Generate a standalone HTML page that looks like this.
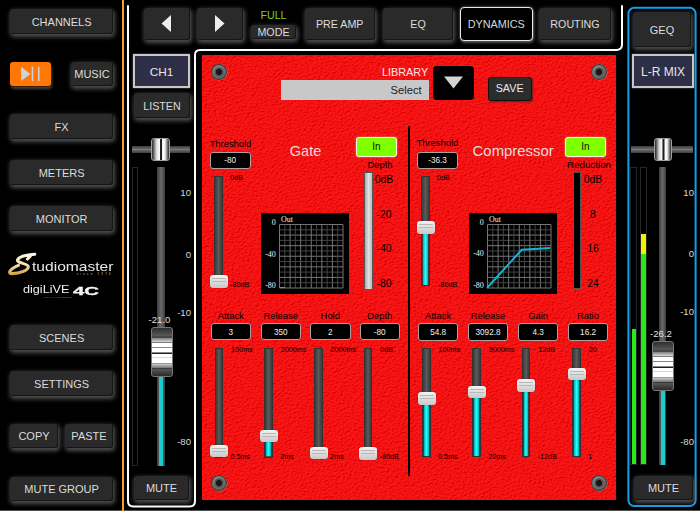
<!DOCTYPE html>
<html><head><meta charset="utf-8"><style>
html,body{margin:0;padding:0;}
body{width:700px;height:511px;overflow:hidden;background:#000;position:relative;font-family:'Liberation Sans', sans-serif;}
</style></head><body>
<div style="position:absolute;left:0;top:510px;width:700px;height:1px;background:#505050"></div>
<div style="position:absolute;left:122px;top:0px;width:2px;height:511px;background:#f4a12a;"></div>
<div style="position:absolute;left:9.8px;top:9px;width:103.6px;height:25px;background:#2a2a2a;border-radius:3px;box-shadow:inset -1px -1px 0 #151515, 1px 2px 4px 1px rgba(105,105,105,0.75);"></div>
<div style="position:absolute;left:-38.400000000000006px;width:200px;text-align:center;top:16.54px;font:11px/1 'Liberation Sans', sans-serif;color:#dcdcdc;white-space:nowrap;">CHANNELS</div>
<div style="position:absolute;left:9.7px;top:61.8px;width:41.6px;height:24.6px;background:#ff7806;border-radius:3px;box-shadow:0 1px 0 #3a1a00, 1px 3px 3px rgba(150,150,150,0.45);"></div>
<svg style="position:absolute;left:10px;top:62px" width="41" height="24"><path d="M11.1 4.8 L20.3 11.9 L11.1 19 Z" fill="#cfd2d6"/><rect x="21.7" y="4.8" width="1.5" height="14.2" fill="#cfd2d6"/><rect x="28" y="4.8" width="1.5" height="14.2" fill="#cfd2d6"/></svg>
<div style="position:absolute;left:71px;top:62px;width:42px;height:24px;background:#2a2a2a;border-radius:3px;box-shadow:inset -1px -1px 0 #151515, 1px 2px 4px 1px rgba(105,105,105,0.75);"></div>
<div style="position:absolute;left:-8.0px;width:200px;text-align:center;top:69.04px;font:11px/1 'Liberation Sans', sans-serif;color:#dcdcdc;white-space:nowrap;">MUSIC</div>
<div style="position:absolute;left:9.8px;top:114px;width:103.6px;height:25.2px;background:#2a2a2a;border-radius:3px;box-shadow:inset -1px -1px 0 #151515, 1px 2px 4px 1px rgba(105,105,105,0.75);"></div>
<div style="position:absolute;left:-38.400000000000006px;width:200px;text-align:center;top:121.64px;font:11px/1 'Liberation Sans', sans-serif;color:#dcdcdc;white-space:nowrap;">FX</div>
<div style="position:absolute;left:9.8px;top:160.4px;width:103.6px;height:25px;background:#2a2a2a;border-radius:3px;box-shadow:inset -1px -1px 0 #151515, 1px 2px 4px 1px rgba(105,105,105,0.75);"></div>
<div style="position:absolute;left:-38.400000000000006px;width:200px;text-align:center;top:167.95px;font:11px/1 'Liberation Sans', sans-serif;color:#dcdcdc;white-space:nowrap;">METERS</div>
<div style="position:absolute;left:9.8px;top:206px;width:103.6px;height:25.2px;background:#2a2a2a;border-radius:3px;box-shadow:inset -1px -1px 0 #151515, 1px 2px 4px 1px rgba(105,105,105,0.75);"></div>
<div style="position:absolute;left:-38.400000000000006px;width:200px;text-align:center;top:213.65px;font:11px/1 'Liberation Sans', sans-serif;color:#dcdcdc;white-space:nowrap;">MONITOR</div>
<div style="position:absolute;left:9.8px;top:325.2px;width:103.6px;height:25px;background:#2a2a2a;border-radius:3px;box-shadow:inset -1px -1px 0 #151515, 1px 2px 4px 1px rgba(105,105,105,0.75);"></div>
<div style="position:absolute;left:-38.400000000000006px;width:200px;text-align:center;top:332.75px;font:11px/1 'Liberation Sans', sans-serif;color:#dcdcdc;white-space:nowrap;">SCENES</div>
<div style="position:absolute;left:9.8px;top:371.3px;width:103.6px;height:24.6px;background:#2a2a2a;border-radius:3px;box-shadow:inset -1px -1px 0 #151515, 1px 2px 4px 1px rgba(105,105,105,0.75);"></div>
<div style="position:absolute;left:-38.400000000000006px;width:200px;text-align:center;top:378.65px;font:11px/1 'Liberation Sans', sans-serif;color:#dcdcdc;white-space:nowrap;">SETTINGS</div>
<div style="position:absolute;left:10px;top:424px;width:48px;height:24px;background:#2a2a2a;border-radius:3px;box-shadow:inset -1px -1px 0 #151515, 1px 2px 4px 1px rgba(105,105,105,0.75);"></div>
<div style="position:absolute;left:-66.0px;width:200px;text-align:center;top:431.05px;font:11px/1 'Liberation Sans', sans-serif;color:#dcdcdc;white-space:nowrap;">COPY</div>
<div style="position:absolute;left:65px;top:424px;width:48px;height:24px;background:#2a2a2a;border-radius:3px;box-shadow:inset -1px -1px 0 #151515, 1px 2px 4px 1px rgba(105,105,105,0.75);"></div>
<div style="position:absolute;left:-11.0px;width:200px;text-align:center;top:431.05px;font:11px/1 'Liberation Sans', sans-serif;color:#dcdcdc;white-space:nowrap;">PASTE</div>
<div style="position:absolute;left:9.8px;top:476.5px;width:103.6px;height:24.5px;background:#2a2a2a;border-radius:3px;box-shadow:inset -1px -1px 0 #151515, 1px 2px 4px 1px rgba(105,105,105,0.75);"></div>
<div style="position:absolute;left:-38.400000000000006px;width:200px;text-align:center;top:483.80px;font:11px/1 'Liberation Sans', sans-serif;color:#dcdcdc;white-space:nowrap;">MUTE GROUP</div>
<svg style="position:absolute;left:4px;top:248px" width="40" height="32"><defs><linearGradient id="sg" x1="0" y1="0" x2="0" y2="1"><stop offset="0" stop-color="#fff8e0"/><stop offset="0.55" stop-color="#f0e0b0"/><stop offset="1" stop-color="#d8a848"/></linearGradient></defs><path d="M30.7 6.3 C24 6.8 15 8.5 13.6 11.8 C12.4 15.2 23.5 15.3 24.2 18.4 C25 22 16 25.6 8 25.6 C3.5 25.6 5.5 21 14.4 17.4 M26.5 8 L23.5 11" fill="none" stroke="url(#sg)" stroke-width="3.1" stroke-linecap="round"/></svg>
<div style="position:absolute;left:31.9px;top:260.57px;font:12.7px/1 'Liberation Sans', sans-serif;color:#e8e8e8;white-space:nowrap;transform:scaleX(1.229);transform-origin:0 0;">tudiomaster</div>
<div style="position:absolute;left:76.8px;top:273.34px;font:2.9px/1 'Liberation Sans', sans-serif;color:#c0c0c0;white-space:nowrap;letter-spacing:2.2px;">since 1976</div>
<div style="position:absolute;left:23px;top:284.84px;font:10.4px/1 'Liberation Sans', sans-serif;color:#f0f0f0;white-space:nowrap;transform:scaleX(1.216);transform-origin:0 0;">digiLiVE</div>
<div style="position:absolute;left:72.8px;top:286.97px;font:10.2px/1 'Liberation Sans', sans-serif;color:#f4f4f4;white-space:nowrap;font-weight:bold;-webkit-text-stroke:0.3px #f4f4f4;transform:scaleX(2.0);transform-origin:0 0;">4C</div>
<div style="position:absolute;left:44px;top:296.51px;font:1.8px/1 'Liberation Sans', sans-serif;color:#999;white-space:nowrap;letter-spacing:0.2px;">DIGITAL MIXING CONSOLE</div>
<svg style="position:absolute;left:0;top:0" width="700" height="511"><path d="M128 6 V501 Q128 506.5 133.5 506.5 H189.5 Q195 506.5 195 501 V55 Q195 50 200 50 H617 Q622 49.5 622 44.5 V6" fill="none" stroke="#fff" stroke-width="2" stroke-linecap="round"/><rect x="628.4" y="7.8" width="67.2" height="498.3" rx="6" fill="none" stroke="#12a0ec" stroke-width="2"/></svg>
<div style="position:absolute;left:144px;top:8px;width:46px;height:31.5px;background:#2a2a2a;border-radius:3px;box-shadow:inset -1px -1px 0 #151515, 1px 2px 4px 1px rgba(105,105,105,0.75);"></div>
<div style="position:absolute;left:67.0px;width:200px;text-align:center;top:18.79px;font:11px/1 'Liberation Sans', sans-serif;color:#dcdcdc;white-space:nowrap;"></div>
<svg style="position:absolute;left:144px;top:8px" width="46" height="31"><path d="M17.5 15.5 L27 7 L27 24 Z" fill="#eee"/></svg>
<div style="position:absolute;left:197px;top:8px;width:46px;height:31.5px;background:#2a2a2a;border-radius:3px;box-shadow:inset -1px -1px 0 #151515, 1px 2px 4px 1px rgba(105,105,105,0.75);"></div>
<div style="position:absolute;left:120.0px;width:200px;text-align:center;top:18.79px;font:11px/1 'Liberation Sans', sans-serif;color:#dcdcdc;white-space:nowrap;"></div>
<svg style="position:absolute;left:197px;top:8px" width="46" height="31"><path d="M27.5 15.5 L18 7 L18 24 Z" fill="#eee"/></svg>
<div style="position:absolute;left:173.5px;width:200px;text-align:center;top:10.30px;font:10.6px/1 'Liberation Sans', sans-serif;color:#7fd41c;white-space:nowrap;">FULL</div>
<div style="position:absolute;left:251px;top:25px;width:45px;height:14px;background:#2a2a2a;border-radius:3px;box-shadow:inset -1px -1px 0 #151515, 1px 2px 4px 1px rgba(105,105,105,0.75);"></div>
<div style="position:absolute;left:173.5px;width:200px;text-align:center;top:27.20px;font:10.7px/1 'Liberation Sans', sans-serif;color:#dcdcdc;white-space:nowrap;">MODE</div>
<div style="position:absolute;left:305px;top:8px;width:69.5px;height:31.5px;background:#2a2a2a;border-radius:3px;box-shadow:inset -1px -1px 0 #151515, 1px 2px 4px 1px rgba(105,105,105,0.75);"></div>
<div style="position:absolute;left:239.75px;width:200px;text-align:center;top:18.95px;font:10.7px/1 'Liberation Sans', sans-serif;color:#dcdcdc;white-space:nowrap;">PRE AMP</div>
<div style="position:absolute;left:383px;top:8px;width:70px;height:31.5px;background:#2a2a2a;border-radius:3px;box-shadow:inset -1px -1px 0 #151515, 1px 2px 4px 1px rgba(105,105,105,0.75);"></div>
<div style="position:absolute;left:318.0px;width:200px;text-align:center;top:18.95px;font:10.7px/1 'Liberation Sans', sans-serif;color:#dcdcdc;white-space:nowrap;">EQ</div>
<div style="position:absolute;left:460px;top:6.8px;width:72.5px;height:33.8px;box-sizing:border-box;background:#000;border:1.6px solid #e8e8e8;border-radius:4px;box-shadow:0 0 3px rgba(255,255,255,0.45), 1px 2px 3px rgba(150,150,150,0.4);"></div>
<div style="position:absolute;left:396.2px;width:200px;text-align:center;top:19.07px;font:10.8px/1 'Liberation Sans', sans-serif;color:#d8d8d8;white-space:nowrap;">DYNAMICS</div>
<div style="position:absolute;left:539px;top:8px;width:72px;height:31.5px;background:#2a2a2a;border-radius:3px;box-shadow:inset -1px -1px 0 #151515, 1px 2px 4px 1px rgba(105,105,105,0.75);"></div>
<div style="position:absolute;left:475.0px;width:200px;text-align:center;top:18.95px;font:10.7px/1 'Liberation Sans', sans-serif;color:#dcdcdc;white-space:nowrap;">ROUTING</div>
<div style="position:absolute;left:133px;top:54px;width:57px;height:34px;box-sizing:border-box;background:#2e2e47;border:2px solid #c8c8c8;box-shadow:0 0 2px rgba(200,200,200,0.5);"></div>
<div style="position:absolute;left:61.5px;width:200px;text-align:center;top:67.01px;font:11.8px/1 'Liberation Sans', sans-serif;color:#e8e8e8;white-space:nowrap;">CH1</div>
<div style="position:absolute;left:134px;top:93px;width:56px;height:25px;background:#2a2a2a;border-radius:3px;box-shadow:inset -1px -1px 0 #151515, 1px 2px 4px 1px rgba(105,105,105,0.75);"></div>
<div style="position:absolute;left:62.0px;width:200px;text-align:center;top:100.70px;font:10.7px/1 'Liberation Sans', sans-serif;color:#dcdcdc;white-space:nowrap;">LISTEN</div>
<div style="position:absolute;left:132px;top:146px;width:58px;height:7.3px;background:linear-gradient(#3e3e3e 0%,#5a5a5a 30%,#787878 50%,#5a5a5a 70%,#3e3e3e 100%);"></div>
<div style="position:absolute;left:151px;top:138px;width:18.7px;height:23px;box-sizing:border-box;border:1px solid #a0a0a0;border-radius:3px;background:linear-gradient(90deg,#2a2a2a 0%,#5a5a5a 8%,#d8d8d8 26%,#fff 44%,#222 49%,#1a1a1a 57%,#fff 62%,#f0f0f0 76%,#777 90%,#2a2a2a 100%);"></div>
<div style="position:absolute;left:131.5px;top:166.5px;width:6.5px;height:299px;box-sizing:border-box;border:1px solid #262626;"></div>
<div style="position:absolute;left:157px;top:167px;width:8px;height:299px;background:linear-gradient(90deg,#3c3c3c,#6a6a6a 50%,#3c3c3c);"></div>
<div style="position:absolute;left:159px;top:377px;width:4px;height:88.5px;background:#1ccccc;"></div>
<div style="position:absolute;left:151px;top:327px;width:22.3px;height:50.3px;box-sizing:border-box;border:1px solid #777;border-radius:3px;background:linear-gradient(#2e2e2e 0%,#5a5a5a 17%,#333 18.5%,#333 19.5%,#7a7a7a 20.5%,#dcdcdc 29.5%,#555 30.5%,#fff 32%,#fff 39%,#444 40.2%,#fff 41.4%,#fff 50.5%,#222 51.5%,#222 53.5%,#fff 54.5%,#fff 61%,#999 62.2%,#fff 63.5%,#fff 72%,#555 73.2%,#cfcfcf 74.5%,#777 83%,#333 84.5%,#555 86%,#2a2a2a 100%);"></div>
<div style="position:absolute;left:59.5px;width:200px;text-align:center;top:315.46px;font:9.6px/1 'Liberation Sans', sans-serif;color:#e0e0e0;white-space:nowrap;">-21.0</div>
<div style="position:absolute;left:-9px;width:200px;text-align:right;top:188.46px;font:9.6px/1 'Liberation Sans', sans-serif;color:#d8d8d8;white-space:nowrap;">10</div>
<div style="position:absolute;left:-9px;width:200px;text-align:right;top:250.06px;font:9.6px/1 'Liberation Sans', sans-serif;color:#d8d8d8;white-space:nowrap;">0</div>
<div style="position:absolute;left:-9px;width:200px;text-align:right;top:308.46px;font:9.6px/1 'Liberation Sans', sans-serif;color:#d8d8d8;white-space:nowrap;">-10</div>
<div style="position:absolute;left:-9px;width:200px;text-align:right;top:437.26px;font:9.6px/1 'Liberation Sans', sans-serif;color:#d8d8d8;white-space:nowrap;">-80</div>
<div style="position:absolute;left:134px;top:476px;width:55px;height:24px;background:#2a2a2a;border-radius:3px;box-shadow:inset -1px -1px 0 #151515, 1px 2px 4px 1px rgba(105,105,105,0.75);"></div>
<div style="position:absolute;left:61.5px;width:200px;text-align:center;top:483.05px;font:11px/1 'Liberation Sans', sans-serif;color:#dcdcdc;white-space:nowrap;">MUTE</div>
<div style="position:absolute;left:633px;top:12px;width:58px;height:35px;background:#2a2a2a;border-radius:3px;box-shadow:inset -1px -1px 0 #151515, 1px 2px 4px 1px rgba(105,105,105,0.75);"></div>
<div style="position:absolute;left:562.0px;width:200px;text-align:center;top:24.54px;font:11px/1 'Liberation Sans', sans-serif;color:#dcdcdc;white-space:nowrap;">GEQ</div>
<div style="position:absolute;left:632px;top:54px;width:62px;height:34px;box-sizing:border-box;background:#2e2e47;border:2px solid #c8c8c8;box-shadow:0 0 2px rgba(200,200,200,0.5);"></div>
<div style="position:absolute;left:563px;width:200px;text-align:center;top:66.48px;font:12px/1 'Liberation Sans', sans-serif;color:#e8e8e8;white-space:nowrap;">L-R MIX</div>
<div style="position:absolute;left:631px;top:146px;width:62px;height:7.3px;background:linear-gradient(#3e3e3e 0%,#5a5a5a 30%,#787878 50%,#5a5a5a 70%,#3e3e3e 100%);"></div>
<div style="position:absolute;left:653.5px;top:138px;width:18.7px;height:23px;box-sizing:border-box;border:1px solid #a0a0a0;border-radius:3px;background:linear-gradient(90deg,#2a2a2a 0%,#5a5a5a 8%,#d8d8d8 26%,#fff 44%,#222 49%,#1a1a1a 57%,#fff 62%,#f0f0f0 76%,#777 90%,#2a2a2a 100%);"></div>
<div style="position:absolute;left:630px;top:166.5px;width:6.5px;height:298px;box-sizing:border-box;border:1px solid #262626;"></div>
<div style="position:absolute;left:639.7px;top:166.5px;width:7px;height:298px;box-sizing:border-box;border:1px solid #262626;"></div>
<div style="position:absolute;left:631.5px;top:328.7px;width:4.5px;height:135.5px;background:#26ea1c;"></div>
<div style="position:absolute;left:641px;top:233.5px;width:4.6px;height:20.1px;background:#f4f000;"></div>
<div style="position:absolute;left:641px;top:253.6px;width:4.6px;height:210.6px;background:#26ea1c;"></div>
<div style="position:absolute;left:659px;top:167px;width:7px;height:298px;background:linear-gradient(90deg,#3c3c3c,#6a6a6a 50%,#3c3c3c);"></div>
<div style="position:absolute;left:661px;top:391px;width:3.5px;height:74px;background:#1ccccc;"></div>
<div style="position:absolute;left:652px;top:341px;width:22.3px;height:50.3px;box-sizing:border-box;border:1px solid #777;border-radius:3px;background:linear-gradient(#2e2e2e 0%,#5a5a5a 17%,#333 18.5%,#333 19.5%,#7a7a7a 20.5%,#dcdcdc 29.5%,#555 30.5%,#fff 32%,#fff 39%,#444 40.2%,#fff 41.4%,#fff 50.5%,#222 51.5%,#222 53.5%,#fff 54.5%,#fff 61%,#999 62.2%,#fff 63.5%,#fff 72%,#555 73.2%,#cfcfcf 74.5%,#777 83%,#333 84.5%,#555 86%,#2a2a2a 100%);"></div>
<div style="position:absolute;left:561px;width:200px;text-align:center;top:328.66px;font:9.6px/1 'Liberation Sans', sans-serif;color:#e0e0e0;white-space:nowrap;">-26.2</div>
<div style="position:absolute;left:494px;width:200px;text-align:right;top:187.56px;font:9.6px/1 'Liberation Sans', sans-serif;color:#d8d8d8;white-space:nowrap;">10</div>
<div style="position:absolute;left:494px;width:200px;text-align:right;top:248.66px;font:9.6px/1 'Liberation Sans', sans-serif;color:#d8d8d8;white-space:nowrap;">0</div>
<div style="position:absolute;left:494px;width:200px;text-align:right;top:307.06px;font:9.6px/1 'Liberation Sans', sans-serif;color:#d8d8d8;white-space:nowrap;">-10</div>
<div style="position:absolute;left:494px;width:200px;text-align:right;top:436.66px;font:9.6px/1 'Liberation Sans', sans-serif;color:#d8d8d8;white-space:nowrap;">-80</div>
<div style="position:absolute;left:634px;top:476px;width:59px;height:24px;background:#2a2a2a;border-radius:3px;box-shadow:inset -1px -1px 0 #151515, 1px 2px 4px 1px rgba(105,105,105,0.75);"></div>
<div style="position:absolute;left:563.5px;width:200px;text-align:center;top:483.05px;font:11px/1 'Liberation Sans', sans-serif;color:#dcdcdc;white-space:nowrap;">MUTE</div>
<svg style="position:absolute;left:202px;top:55px" width="414" height="445"><defs><filter id="leather" x="0" y="0" width="100%" height="100%"><feTurbulence type="fractalNoise" baseFrequency="0.45 0.8" numOctaves="2" seed="3" result="noise"/><feDiffuseLighting in="noise" lighting-color="#fff" surfaceScale="0.9" result="light"><feDistantLight azimuth="235" elevation="60"/></feDiffuseLighting><feComposite in="light" in2="SourceGraphic" operator="arithmetic" k1="1.04" k2="0.03" k3="0" k4="-0.03"/></filter></defs><rect x="0" y="0" width="414" height="445" fill="#ff1c1c" filter="url(#leather)"/></svg>
<svg style="position:absolute;left:209.4px;top:62.3px" width="20" height="20"><defs><radialGradient id="scr21972" cx="0.4" cy="0.35" r="0.7"><stop offset="0" stop-color="#9a9a9a"/><stop offset="1" stop-color="#5a5a5a"/></radialGradient></defs><circle cx="10.3" cy="10.3" r="8.2" fill="#f0c8c8" opacity="0.55"/><circle cx="10" cy="10" r="8" fill="#333"/><circle cx="10" cy="10" r="7" fill="url(#scr21972)"/><circle cx="10" cy="10" r="4.8" fill="#555"/><path d="M10 6.6 L12.9 8.3 L12.9 11.7 L10 13.4 L7.1 11.7 L7.1 8.3 Z" fill="#161616"/></svg>
<svg style="position:absolute;left:588.8px;top:62.3px" width="20" height="20"><defs><radialGradient id="scr59872" cx="0.4" cy="0.35" r="0.7"><stop offset="0" stop-color="#9a9a9a"/><stop offset="1" stop-color="#5a5a5a"/></radialGradient></defs><circle cx="10.3" cy="10.3" r="8.2" fill="#f0c8c8" opacity="0.55"/><circle cx="10" cy="10" r="8" fill="#333"/><circle cx="10" cy="10" r="7" fill="url(#scr59872)"/><circle cx="10" cy="10" r="4.8" fill="#555"/><path d="M10 6.6 L12.9 8.3 L12.9 11.7 L10 13.4 L7.1 11.7 L7.1 8.3 Z" fill="#161616"/></svg>
<svg style="position:absolute;left:209.4px;top:472.7px" width="20" height="20"><defs><radialGradient id="scr219482" cx="0.4" cy="0.35" r="0.7"><stop offset="0" stop-color="#9a9a9a"/><stop offset="1" stop-color="#5a5a5a"/></radialGradient></defs><circle cx="10.3" cy="10.3" r="8.2" fill="#f0c8c8" opacity="0.55"/><circle cx="10" cy="10" r="8" fill="#333"/><circle cx="10" cy="10" r="7" fill="url(#scr219482)"/><circle cx="10" cy="10" r="4.8" fill="#555"/><path d="M10 6.6 L12.9 8.3 L12.9 11.7 L10 13.4 L7.1 11.7 L7.1 8.3 Z" fill="#161616"/></svg>
<svg style="position:absolute;left:588.9px;top:472.8px" width="20" height="20"><defs><radialGradient id="scr598482" cx="0.4" cy="0.35" r="0.7"><stop offset="0" stop-color="#9a9a9a"/><stop offset="1" stop-color="#5a5a5a"/></radialGradient></defs><circle cx="10.3" cy="10.3" r="8.2" fill="#f0c8c8" opacity="0.55"/><circle cx="10" cy="10" r="8" fill="#333"/><circle cx="10" cy="10" r="7" fill="url(#scr598482)"/><circle cx="10" cy="10" r="4.8" fill="#555"/><path d="M10 6.6 L12.9 8.3 L12.9 11.7 L10 13.4 L7.1 11.7 L7.1 8.3 Z" fill="#161616"/></svg>
<div style="position:absolute;left:228.3px;width:200px;text-align:right;top:67.26px;font:10.9px/1 'Liberation Sans', sans-serif;color:#ffe4e4;white-space:nowrap;">LIBRARY</div>
<div style="position:absolute;left:281px;top:80px;width:148px;height:20px;background:#c8c8c8;"></div>
<div style="position:absolute;left:221.7px;width:200px;text-align:right;top:84.81px;font:11.2px/1 'Liberation Sans', sans-serif;color:#222;white-space:nowrap;">Select</div>
<div style="position:absolute;left:433px;top:66px;width:41px;height:33.5px;background:#000;border-radius:4px;"></div>
<svg style="position:absolute;left:433px;top:66px" width="41" height="34"><path d="M11 10.5 L30 10.5 L20.5 22.5 Z" fill="#d4d4d4"/></svg>
<div style="position:absolute;left:488px;top:77px;width:43.5px;height:23.5px;box-sizing:border-box;background:#2c2c2c;border:1px solid #111;border-radius:3px;box-shadow:1px 1px 2px rgba(40,40,40,0.7);"></div>
<div style="position:absolute;left:409.7px;width:200px;text-align:center;top:83.47px;font:10.8px/1 'Liberation Sans', sans-serif;color:#e8e8e8;white-space:nowrap;">SAVE</div>
<div style="position:absolute;left:408px;top:126px;width:2px;height:350px;background:#000;"></div>
<div style="position:absolute;left:130.5px;width:200px;text-align:center;top:139.00px;font:9.4px/1 'Liberation Sans', sans-serif;color:#000;white-space:nowrap;">Threshold</div>
<div style="position:absolute;left:210px;top:152px;width:40.5px;height:16.5px;box-sizing:border-box;background:#000;border:1px solid #b0a0a0;border-radius:3px;"></div>
<div style="position:absolute;left:130.25px;width:200px;text-align:center;top:156.64px;font:8.2px/1 'Liberation Sans', sans-serif;color:#f0f0f0;white-space:nowrap;">-80</div>
<div style="position:absolute;left:230.1px;top:173.85px;font:7.2px/1 'Liberation Sans', sans-serif;color:#000;white-space:nowrap;">0dB</div>
<div style="position:absolute;left:214px;top:176.3px;width:8.5px;height:109.69999999999999px;box-sizing:border-box;background:linear-gradient(90deg,#3a3a3a,#5a5a5a 50%,#3a3a3a);border:1px solid #333;"></div>
<div style="position:absolute;left:209.5px;top:275px;width:18px;height:12.5px;box-sizing:border-box;border-radius:3px;background:linear-gradient(#f4f4f4,#e6e6e6 30%,#c8c8c8 100%);box-shadow:0 0 1px rgba(0,0,0,0.5);"></div>
<div style="position:absolute;left:211.5px;top:278px;width:14px;height:1px;background:#b8b8b8;"></div>
<div style="position:absolute;left:211.5px;top:281px;width:14px;height:1px;background:#b8b8b8;"></div>
<div style="position:absolute;left:230px;top:280.65px;font:7.2px/1 'Liberation Sans', sans-serif;color:#000;white-space:nowrap;">-80dB</div>
<div style="position:absolute;left:289.7px;top:143.76px;font:14.6px/1 'Liberation Sans', sans-serif;color:#e2dcdc;white-space:nowrap;">Gate</div>
<div style="position:absolute;left:356px;top:137px;width:41px;height:19.5px;box-sizing:border-box;background:#80ff00;border:1.5px solid #f4f4e0;border-radius:3px;box-shadow:0 0 2px rgba(255,255,255,0.6);"></div>
<div style="position:absolute;left:276.5px;width:200px;text-align:center;top:142.40px;font:10px/1 'Liberation Sans', sans-serif;color:#111;white-space:nowrap;">In</div>
<div style="position:absolute;left:280px;width:200px;text-align:center;top:159.50px;font:9.4px/1 'Liberation Sans', sans-serif;color:#000;white-space:nowrap;">Depth</div>
<div style="position:absolute;left:364px;top:172px;width:8.5px;height:118px;box-sizing:border-box;background:linear-gradient(90deg,#aaa,#e0e0e0 50%,#bbb);border:1px solid #555;"></div>
<div style="position:absolute;left:284px;width:200px;text-align:center;top:175.44px;font:10.4px/1 'Liberation Sans', sans-serif;color:#000;white-space:nowrap;">0dB</div>
<div style="position:absolute;left:284px;width:200px;text-align:center;top:210.14px;font:10.4px/1 'Liberation Sans', sans-serif;color:#000;white-space:nowrap;">-20</div>
<div style="position:absolute;left:284px;width:200px;text-align:center;top:244.44px;font:10.4px/1 'Liberation Sans', sans-serif;color:#000;white-space:nowrap;">-40</div>
<div style="position:absolute;left:284px;width:200px;text-align:center;top:278.94px;font:10.4px/1 'Liberation Sans', sans-serif;color:#000;white-space:nowrap;">-80</div>
<div style="position:absolute;left:261px;top:213px;width:88px;height:81px;background:#000;"></div>
<svg style="position:absolute;left:278.5px;top:224.0px;overflow:visible" width="64" height="64"><g transform="translate(0.5,0.5)"><line x1="0.00" y1="0" x2="0.00" y2="63.5" stroke="#777" stroke-width="1"/><line x1="0" y1="0.00" x2="63.5" y2="0.00" stroke="#777" stroke-width="1"/><line x1="5.29" y1="0" x2="5.29" y2="63.5" stroke="#444" stroke-width="1"/><line x1="0" y1="5.29" x2="63.5" y2="5.29" stroke="#444" stroke-width="1"/><line x1="10.58" y1="0" x2="10.58" y2="63.5" stroke="#777" stroke-width="1"/><line x1="0" y1="10.58" x2="63.5" y2="10.58" stroke="#777" stroke-width="1"/><line x1="15.88" y1="0" x2="15.88" y2="63.5" stroke="#444" stroke-width="1"/><line x1="0" y1="15.88" x2="63.5" y2="15.88" stroke="#444" stroke-width="1"/><line x1="21.17" y1="0" x2="21.17" y2="63.5" stroke="#777" stroke-width="1"/><line x1="0" y1="21.17" x2="63.5" y2="21.17" stroke="#777" stroke-width="1"/><line x1="26.46" y1="0" x2="26.46" y2="63.5" stroke="#444" stroke-width="1"/><line x1="0" y1="26.46" x2="63.5" y2="26.46" stroke="#444" stroke-width="1"/><line x1="31.75" y1="0" x2="31.75" y2="63.5" stroke="#777" stroke-width="1"/><line x1="0" y1="31.75" x2="63.5" y2="31.75" stroke="#777" stroke-width="1"/><line x1="37.04" y1="0" x2="37.04" y2="63.5" stroke="#444" stroke-width="1"/><line x1="0" y1="37.04" x2="63.5" y2="37.04" stroke="#444" stroke-width="1"/><line x1="42.33" y1="0" x2="42.33" y2="63.5" stroke="#777" stroke-width="1"/><line x1="0" y1="42.33" x2="63.5" y2="42.33" stroke="#777" stroke-width="1"/><line x1="47.62" y1="0" x2="47.62" y2="63.5" stroke="#444" stroke-width="1"/><line x1="0" y1="47.62" x2="63.5" y2="47.62" stroke="#444" stroke-width="1"/><line x1="52.92" y1="0" x2="52.92" y2="63.5" stroke="#777" stroke-width="1"/><line x1="0" y1="52.92" x2="63.5" y2="52.92" stroke="#777" stroke-width="1"/><line x1="58.21" y1="0" x2="58.21" y2="63.5" stroke="#444" stroke-width="1"/><line x1="0" y1="58.21" x2="63.5" y2="58.21" stroke="#444" stroke-width="1"/><line x1="63.50" y1="0" x2="63.50" y2="63.5" stroke="#777" stroke-width="1"/><line x1="0" y1="63.50" x2="63.5" y2="63.50" stroke="#777" stroke-width="1"/></g></svg>
<div style="position:absolute;left:281px;top:215.76px;font:8px/1 'Liberation Serif', serif;color:#f0f0f0;white-space:nowrap;">Out</div>
<div style="position:absolute;left:75.80000000000001px;width:200px;text-align:right;top:219.06px;font:8px/1 'Liberation Serif', serif;color:#f0f0f0;white-space:nowrap;">0</div>
<div style="position:absolute;left:75.80000000000001px;width:200px;text-align:right;top:250.66px;font:8px/1 'Liberation Serif', serif;color:#f0f0f0;white-space:nowrap;">-40</div>
<div style="position:absolute;left:75.80000000000001px;width:200px;text-align:right;top:282.16px;font:8px/1 'Liberation Serif', serif;color:#f0f0f0;white-space:nowrap;">-80</div>
<div style="position:absolute;left:279.5px;top:286.8px;width:5px;height:1.6px;background:#1ab8d0;"></div>
<div style="position:absolute;left:130.75px;width:200px;text-align:center;top:310.90px;font:9.4px/1 'Liberation Sans', sans-serif;color:#000;white-space:nowrap;">Attack</div>
<div style="position:absolute;left:210.5px;top:323.3px;width:40.5px;height:17.2px;box-sizing:border-box;background:#000;border:1px solid #b0a0a0;border-radius:3px;"></div>
<div style="position:absolute;left:130.75px;width:200px;text-align:center;top:328.89px;font:8.2px/1 'Liberation Sans', sans-serif;color:#f0f0f0;white-space:nowrap;">3</div>
<div style="position:absolute;left:231.0px;top:345.75px;font:7.2px/1 'Liberation Sans', sans-serif;color:#000;white-space:nowrap;">100ms</div>
<div style="position:absolute;left:214.5px;top:348px;width:8.5px;height:109.5px;box-sizing:border-box;background:linear-gradient(90deg,#3a3a3a,#5a5a5a 50%,#3a3a3a);border:1px solid #333;"></div>
<div style="position:absolute;left:210.0px;top:444.6px;width:18px;height:12.5px;box-sizing:border-box;border-radius:3px;background:linear-gradient(#f4f4f4,#e6e6e6 30%,#c8c8c8 100%);box-shadow:0 0 1px rgba(0,0,0,0.5);"></div>
<div style="position:absolute;left:212.0px;top:447.6px;width:14px;height:1px;background:#b8b8b8;"></div>
<div style="position:absolute;left:212.0px;top:450.6px;width:14px;height:1px;background:#b8b8b8;"></div>
<div style="position:absolute;left:230.5px;top:453.25px;font:7.2px/1 'Liberation Sans', sans-serif;color:#000;white-space:nowrap;">0.5ms</div>
<div style="position:absolute;left:180.75px;width:200px;text-align:center;top:310.90px;font:9.4px/1 'Liberation Sans', sans-serif;color:#000;white-space:nowrap;">Release</div>
<div style="position:absolute;left:260.5px;top:323.3px;width:40.5px;height:17.2px;box-sizing:border-box;background:#000;border:1px solid #b0a0a0;border-radius:3px;"></div>
<div style="position:absolute;left:180.75px;width:200px;text-align:center;top:328.89px;font:8.2px/1 'Liberation Sans', sans-serif;color:#f0f0f0;white-space:nowrap;">350</div>
<div style="position:absolute;left:280.8px;top:345.75px;font:7.2px/1 'Liberation Sans', sans-serif;color:#000;white-space:nowrap;">2000ms</div>
<div style="position:absolute;left:264.3px;top:348px;width:8.5px;height:109.5px;box-sizing:border-box;background:linear-gradient(90deg,#3a3a3a,#5a5a5a 50%,#3a3a3a);border:1px solid #333;"></div>
<div style="position:absolute;left:266.3px;top:441.7px;width:4.5px;height:14.800000000000011px;background:linear-gradient(90deg,#08b0b0,#2ff 50%,#08b0b0);"></div>
<div style="position:absolute;left:259.8px;top:429.7px;width:18px;height:12.5px;box-sizing:border-box;border-radius:3px;background:linear-gradient(#f4f4f4,#e6e6e6 30%,#c8c8c8 100%);box-shadow:0 0 1px rgba(0,0,0,0.5);"></div>
<div style="position:absolute;left:261.8px;top:432.7px;width:14px;height:1px;background:#b8b8b8;"></div>
<div style="position:absolute;left:261.8px;top:435.7px;width:14px;height:1px;background:#b8b8b8;"></div>
<div style="position:absolute;left:280.3px;top:453.25px;font:7.2px/1 'Liberation Sans', sans-serif;color:#000;white-space:nowrap;">2ms</div>
<div style="position:absolute;left:230.25px;width:200px;text-align:center;top:310.90px;font:9.4px/1 'Liberation Sans', sans-serif;color:#000;white-space:nowrap;">Hold</div>
<div style="position:absolute;left:310px;top:323.3px;width:40.5px;height:17.2px;box-sizing:border-box;background:#000;border:1px solid #b0a0a0;border-radius:3px;"></div>
<div style="position:absolute;left:230.25px;width:200px;text-align:center;top:328.89px;font:8.2px/1 'Liberation Sans', sans-serif;color:#f0f0f0;white-space:nowrap;">2</div>
<div style="position:absolute;left:330.6px;top:345.75px;font:7.2px/1 'Liberation Sans', sans-serif;color:#000;white-space:nowrap;">2000ms</div>
<div style="position:absolute;left:314.1px;top:348px;width:8.5px;height:109.5px;box-sizing:border-box;background:linear-gradient(90deg,#3a3a3a,#5a5a5a 50%,#3a3a3a);border:1px solid #333;"></div>
<div style="position:absolute;left:309.6px;top:446.7px;width:18px;height:12.5px;box-sizing:border-box;border-radius:3px;background:linear-gradient(#f4f4f4,#e6e6e6 30%,#c8c8c8 100%);box-shadow:0 0 1px rgba(0,0,0,0.5);"></div>
<div style="position:absolute;left:311.6px;top:449.7px;width:14px;height:1px;background:#b8b8b8;"></div>
<div style="position:absolute;left:311.6px;top:452.7px;width:14px;height:1px;background:#b8b8b8;"></div>
<div style="position:absolute;left:330.1px;top:453.25px;font:7.2px/1 'Liberation Sans', sans-serif;color:#000;white-space:nowrap;">2ms</div>
<div style="position:absolute;left:279.75px;width:200px;text-align:center;top:310.90px;font:9.4px/1 'Liberation Sans', sans-serif;color:#000;white-space:nowrap;">Depth</div>
<div style="position:absolute;left:359.5px;top:323.3px;width:40.5px;height:17.2px;box-sizing:border-box;background:#000;border:1px solid #b0a0a0;border-radius:3px;"></div>
<div style="position:absolute;left:279.75px;width:200px;text-align:center;top:328.89px;font:8.2px/1 'Liberation Sans', sans-serif;color:#f0f0f0;white-space:nowrap;">-80</div>
<div style="position:absolute;left:380.1px;top:345.75px;font:7.2px/1 'Liberation Sans', sans-serif;color:#000;white-space:nowrap;">0dB</div>
<div style="position:absolute;left:363.6px;top:348px;width:8.5px;height:109.5px;box-sizing:border-box;background:linear-gradient(90deg,#3a3a3a,#5a5a5a 50%,#3a3a3a);border:1px solid #333;"></div>
<div style="position:absolute;left:359.1px;top:447px;width:18px;height:12.5px;box-sizing:border-box;border-radius:3px;background:linear-gradient(#f4f4f4,#e6e6e6 30%,#c8c8c8 100%);box-shadow:0 0 1px rgba(0,0,0,0.5);"></div>
<div style="position:absolute;left:361.1px;top:450px;width:14px;height:1px;background:#b8b8b8;"></div>
<div style="position:absolute;left:361.1px;top:453px;width:14px;height:1px;background:#b8b8b8;"></div>
<div style="position:absolute;left:379.6px;top:453.25px;font:7.2px/1 'Liberation Sans', sans-serif;color:#000;white-space:nowrap;">-80dB</div>
<div style="position:absolute;left:337.4px;width:200px;text-align:center;top:138.30px;font:9.4px/1 'Liberation Sans', sans-serif;color:#000;white-space:nowrap;">Threshold</div>
<div style="position:absolute;left:417px;top:152px;width:41px;height:16.5px;box-sizing:border-box;background:#000;border:1px solid #b0a0a0;border-radius:3px;"></div>
<div style="position:absolute;left:337.5px;width:200px;text-align:center;top:156.64px;font:8.2px/1 'Liberation Sans', sans-serif;color:#f0f0f0;white-space:nowrap;">-36.3</div>
<div style="position:absolute;left:437px;top:174.05px;font:7.2px/1 'Liberation Sans', sans-serif;color:#000;white-space:nowrap;">0dB</div>
<div style="position:absolute;left:421px;top:176px;width:8.5px;height:109.69999999999999px;box-sizing:border-box;background:linear-gradient(90deg,#3a3a3a,#5a5a5a 50%,#3a3a3a);border:1px solid #333;"></div>
<div style="position:absolute;left:423px;top:233px;width:4.5px;height:51.69999999999999px;background:linear-gradient(90deg,#08b0b0,#2ff 50%,#08b0b0);"></div>
<div style="position:absolute;left:416.5px;top:221px;width:18px;height:12.5px;box-sizing:border-box;border-radius:3px;background:linear-gradient(#f4f4f4,#e6e6e6 30%,#c8c8c8 100%);box-shadow:0 0 1px rgba(0,0,0,0.5);"></div>
<div style="position:absolute;left:418.5px;top:224px;width:14px;height:1px;background:#b8b8b8;"></div>
<div style="position:absolute;left:418.5px;top:227px;width:14px;height:1px;background:#b8b8b8;"></div>
<div style="position:absolute;left:438px;top:280.55px;font:7.2px/1 'Liberation Sans', sans-serif;color:#000;white-space:nowrap;">-80dB</div>
<div style="position:absolute;left:472.6px;top:143.92px;font:14.9px/1 'Liberation Sans', sans-serif;color:#e2dcdc;white-space:nowrap;">Compressor</div>
<div style="position:absolute;left:565px;top:137px;width:41px;height:19.5px;box-sizing:border-box;background:#80ff00;border:1.5px solid #f4f4e0;border-radius:3px;box-shadow:0 0 2px rgba(255,255,255,0.6);"></div>
<div style="position:absolute;left:485.5px;width:200px;text-align:center;top:142.40px;font:10px/1 'Liberation Sans', sans-serif;color:#111;white-space:nowrap;">In</div>
<div style="position:absolute;left:489px;width:200px;text-align:center;top:160.03px;font:9.8px/1 'Liberation Sans', sans-serif;color:#000;white-space:nowrap;">Reduction</div>
<div style="position:absolute;left:573px;top:171.6px;width:8px;height:117.5px;box-sizing:border-box;background:#000;border:1px solid #555;"></div>
<div style="position:absolute;left:493px;width:200px;text-align:center;top:175.24px;font:10.4px/1 'Liberation Sans', sans-serif;color:#000;white-space:nowrap;">0dB</div>
<div style="position:absolute;left:493px;width:200px;text-align:center;top:210.14px;font:10.4px/1 'Liberation Sans', sans-serif;color:#000;white-space:nowrap;">8</div>
<div style="position:absolute;left:493px;width:200px;text-align:center;top:244.44px;font:10.4px/1 'Liberation Sans', sans-serif;color:#000;white-space:nowrap;">16</div>
<div style="position:absolute;left:493px;width:200px;text-align:center;top:278.74px;font:10.4px/1 'Liberation Sans', sans-serif;color:#000;white-space:nowrap;">24</div>
<div style="position:absolute;left:469px;top:213px;width:88px;height:81px;background:#000;"></div>
<svg style="position:absolute;left:486.5px;top:223.5px;overflow:visible" width="64" height="64"><g transform="translate(0.5,0.5)"><line x1="0.00" y1="0" x2="0.00" y2="63.5" stroke="#777" stroke-width="1"/><line x1="0" y1="0.00" x2="63.5" y2="0.00" stroke="#777" stroke-width="1"/><line x1="5.29" y1="0" x2="5.29" y2="63.5" stroke="#444" stroke-width="1"/><line x1="0" y1="5.29" x2="63.5" y2="5.29" stroke="#444" stroke-width="1"/><line x1="10.58" y1="0" x2="10.58" y2="63.5" stroke="#777" stroke-width="1"/><line x1="0" y1="10.58" x2="63.5" y2="10.58" stroke="#777" stroke-width="1"/><line x1="15.88" y1="0" x2="15.88" y2="63.5" stroke="#444" stroke-width="1"/><line x1="0" y1="15.88" x2="63.5" y2="15.88" stroke="#444" stroke-width="1"/><line x1="21.17" y1="0" x2="21.17" y2="63.5" stroke="#777" stroke-width="1"/><line x1="0" y1="21.17" x2="63.5" y2="21.17" stroke="#777" stroke-width="1"/><line x1="26.46" y1="0" x2="26.46" y2="63.5" stroke="#444" stroke-width="1"/><line x1="0" y1="26.46" x2="63.5" y2="26.46" stroke="#444" stroke-width="1"/><line x1="31.75" y1="0" x2="31.75" y2="63.5" stroke="#777" stroke-width="1"/><line x1="0" y1="31.75" x2="63.5" y2="31.75" stroke="#777" stroke-width="1"/><line x1="37.04" y1="0" x2="37.04" y2="63.5" stroke="#444" stroke-width="1"/><line x1="0" y1="37.04" x2="63.5" y2="37.04" stroke="#444" stroke-width="1"/><line x1="42.33" y1="0" x2="42.33" y2="63.5" stroke="#777" stroke-width="1"/><line x1="0" y1="42.33" x2="63.5" y2="42.33" stroke="#777" stroke-width="1"/><line x1="47.62" y1="0" x2="47.62" y2="63.5" stroke="#444" stroke-width="1"/><line x1="0" y1="47.62" x2="63.5" y2="47.62" stroke="#444" stroke-width="1"/><line x1="52.92" y1="0" x2="52.92" y2="63.5" stroke="#777" stroke-width="1"/><line x1="0" y1="52.92" x2="63.5" y2="52.92" stroke="#777" stroke-width="1"/><line x1="58.21" y1="0" x2="58.21" y2="63.5" stroke="#444" stroke-width="1"/><line x1="0" y1="58.21" x2="63.5" y2="58.21" stroke="#444" stroke-width="1"/><line x1="63.50" y1="0" x2="63.50" y2="63.5" stroke="#777" stroke-width="1"/><line x1="0" y1="63.50" x2="63.5" y2="63.50" stroke="#777" stroke-width="1"/></g></svg>
<div style="position:absolute;left:489px;top:215.76px;font:8px/1 'Liberation Serif', serif;color:#f0f0f0;white-space:nowrap;">Out</div>
<div style="position:absolute;left:283.8px;width:200px;text-align:right;top:218.56px;font:8px/1 'Liberation Serif', serif;color:#f0f0f0;white-space:nowrap;">0</div>
<div style="position:absolute;left:283.8px;width:200px;text-align:right;top:250.16px;font:8px/1 'Liberation Serif', serif;color:#f0f0f0;white-space:nowrap;">-40</div>
<div style="position:absolute;left:283.8px;width:200px;text-align:right;top:281.66px;font:8px/1 'Liberation Serif', serif;color:#f0f0f0;white-space:nowrap;">-80</div>
<svg style="position:absolute;left:469px;top:213px" width="88" height="81"><path d="M18 75 L52.7 36.8 L81.3 35" fill="none" stroke="#14b4d4" stroke-width="2"/></svg>
<div style="position:absolute;left:338.05px;width:200px;text-align:center;top:310.90px;font:9.4px/1 'Liberation Sans', sans-serif;color:#000;white-space:nowrap;">Attack</div>
<div style="position:absolute;left:417.8px;top:323.3px;width:40.7px;height:17.3px;box-sizing:border-box;background:#000;border:1px solid #b0a0a0;border-radius:3px;"></div>
<div style="position:absolute;left:338.15000000000003px;width:200px;text-align:center;top:328.94px;font:8.2px/1 'Liberation Sans', sans-serif;color:#f0f0f0;white-space:nowrap;">54.8</div>
<div style="position:absolute;left:438.6px;top:345.75px;font:7.2px/1 'Liberation Sans', sans-serif;color:#000;white-space:nowrap;">100ms</div>
<div style="position:absolute;left:422.1px;top:348px;width:8.5px;height:108.80000000000001px;box-sizing:border-box;background:linear-gradient(90deg,#3a3a3a,#5a5a5a 50%,#3a3a3a);border:1px solid #333;"></div>
<div style="position:absolute;left:424.1px;top:404px;width:4.5px;height:51.80000000000001px;background:linear-gradient(90deg,#08b0b0,#2ff 50%,#08b0b0);"></div>
<div style="position:absolute;left:417.6px;top:392px;width:18px;height:12.5px;box-sizing:border-box;border-radius:3px;background:linear-gradient(#f4f4f4,#e6e6e6 30%,#c8c8c8 100%);box-shadow:0 0 1px rgba(0,0,0,0.5);"></div>
<div style="position:absolute;left:419.6px;top:395px;width:14px;height:1px;background:#b8b8b8;"></div>
<div style="position:absolute;left:419.6px;top:398px;width:14px;height:1px;background:#b8b8b8;"></div>
<div style="position:absolute;left:438.1px;top:453.25px;font:7.2px/1 'Liberation Sans', sans-serif;color:#000;white-space:nowrap;">0.5ms</div>
<div style="position:absolute;left:387.95px;width:200px;text-align:center;top:310.90px;font:9.4px/1 'Liberation Sans', sans-serif;color:#000;white-space:nowrap;">Release</div>
<div style="position:absolute;left:467.7px;top:323.3px;width:40.7px;height:17.3px;box-sizing:border-box;background:#000;border:1px solid #b0a0a0;border-radius:3px;"></div>
<div style="position:absolute;left:388.05px;width:200px;text-align:center;top:328.94px;font:8.2px/1 'Liberation Sans', sans-serif;color:#f0f0f0;white-space:nowrap;">3092.8</div>
<div style="position:absolute;left:488.7px;top:345.75px;font:7.2px/1 'Liberation Sans', sans-serif;color:#000;white-space:nowrap;">5000ms</div>
<div style="position:absolute;left:472.2px;top:348px;width:8.5px;height:108.80000000000001px;box-sizing:border-box;background:linear-gradient(90deg,#3a3a3a,#5a5a5a 50%,#3a3a3a);border:1px solid #333;"></div>
<div style="position:absolute;left:474.2px;top:397.7px;width:4.5px;height:58.10000000000002px;background:linear-gradient(90deg,#08b0b0,#2ff 50%,#08b0b0);"></div>
<div style="position:absolute;left:467.7px;top:385.7px;width:18px;height:12.5px;box-sizing:border-box;border-radius:3px;background:linear-gradient(#f4f4f4,#e6e6e6 30%,#c8c8c8 100%);box-shadow:0 0 1px rgba(0,0,0,0.5);"></div>
<div style="position:absolute;left:469.7px;top:388.7px;width:14px;height:1px;background:#b8b8b8;"></div>
<div style="position:absolute;left:469.7px;top:391.7px;width:14px;height:1px;background:#b8b8b8;"></div>
<div style="position:absolute;left:488.2px;top:453.25px;font:7.2px/1 'Liberation Sans', sans-serif;color:#000;white-space:nowrap;">20ms</div>
<div style="position:absolute;left:438.04999999999995px;width:200px;text-align:center;top:310.90px;font:9.4px/1 'Liberation Sans', sans-serif;color:#000;white-space:nowrap;">Gain</div>
<div style="position:absolute;left:517.8px;top:323.3px;width:40.7px;height:17.3px;box-sizing:border-box;background:#000;border:1px solid #b0a0a0;border-radius:3px;"></div>
<div style="position:absolute;left:438.15px;width:200px;text-align:center;top:328.94px;font:8.2px/1 'Liberation Sans', sans-serif;color:#f0f0f0;white-space:nowrap;">4.3</div>
<div style="position:absolute;left:538.2px;top:345.75px;font:7.2px/1 'Liberation Sans', sans-serif;color:#000;white-space:nowrap;">12dB</div>
<div style="position:absolute;left:521.7px;top:348px;width:8.5px;height:108.80000000000001px;box-sizing:border-box;background:linear-gradient(90deg,#3a3a3a,#5a5a5a 50%,#3a3a3a);border:1px solid #333;"></div>
<div style="position:absolute;left:523.7px;top:391.3px;width:4.5px;height:64.5px;background:linear-gradient(90deg,#08b0b0,#2ff 50%,#08b0b0);"></div>
<div style="position:absolute;left:517.2px;top:379.3px;width:18px;height:12.5px;box-sizing:border-box;border-radius:3px;background:linear-gradient(#f4f4f4,#e6e6e6 30%,#c8c8c8 100%);box-shadow:0 0 1px rgba(0,0,0,0.5);"></div>
<div style="position:absolute;left:519.2px;top:382.3px;width:14px;height:1px;background:#b8b8b8;"></div>
<div style="position:absolute;left:519.2px;top:385.3px;width:14px;height:1px;background:#b8b8b8;"></div>
<div style="position:absolute;left:537.7px;top:453.25px;font:7.2px/1 'Liberation Sans', sans-serif;color:#000;white-space:nowrap;">-12dB</div>
<div style="position:absolute;left:487.95000000000005px;width:200px;text-align:center;top:310.90px;font:9.4px/1 'Liberation Sans', sans-serif;color:#000;white-space:nowrap;">Ratio</div>
<div style="position:absolute;left:567.7px;top:323.3px;width:40.7px;height:17.3px;box-sizing:border-box;background:#000;border:1px solid #b0a0a0;border-radius:3px;"></div>
<div style="position:absolute;left:488.05000000000007px;width:200px;text-align:center;top:328.94px;font:8.2px/1 'Liberation Sans', sans-serif;color:#f0f0f0;white-space:nowrap;">16.2</div>
<div style="position:absolute;left:588.7px;top:345.75px;font:7.2px/1 'Liberation Sans', sans-serif;color:#000;white-space:nowrap;">20</div>
<div style="position:absolute;left:572.2px;top:348px;width:8.5px;height:108.80000000000001px;box-sizing:border-box;background:linear-gradient(90deg,#3a3a3a,#5a5a5a 50%,#3a3a3a);border:1px solid #333;"></div>
<div style="position:absolute;left:574.2px;top:379.5px;width:4.5px;height:76.30000000000001px;background:linear-gradient(90deg,#08b0b0,#2ff 50%,#08b0b0);"></div>
<div style="position:absolute;left:567.7px;top:367.5px;width:18px;height:12.5px;box-sizing:border-box;border-radius:3px;background:linear-gradient(#f4f4f4,#e6e6e6 30%,#c8c8c8 100%);box-shadow:0 0 1px rgba(0,0,0,0.5);"></div>
<div style="position:absolute;left:569.7px;top:370.5px;width:14px;height:1px;background:#b8b8b8;"></div>
<div style="position:absolute;left:569.7px;top:373.5px;width:14px;height:1px;background:#b8b8b8;"></div>
<div style="position:absolute;left:588.2px;top:453.25px;font:7.2px/1 'Liberation Sans', sans-serif;color:#000;white-space:nowrap;">1</div>
</body></html>
